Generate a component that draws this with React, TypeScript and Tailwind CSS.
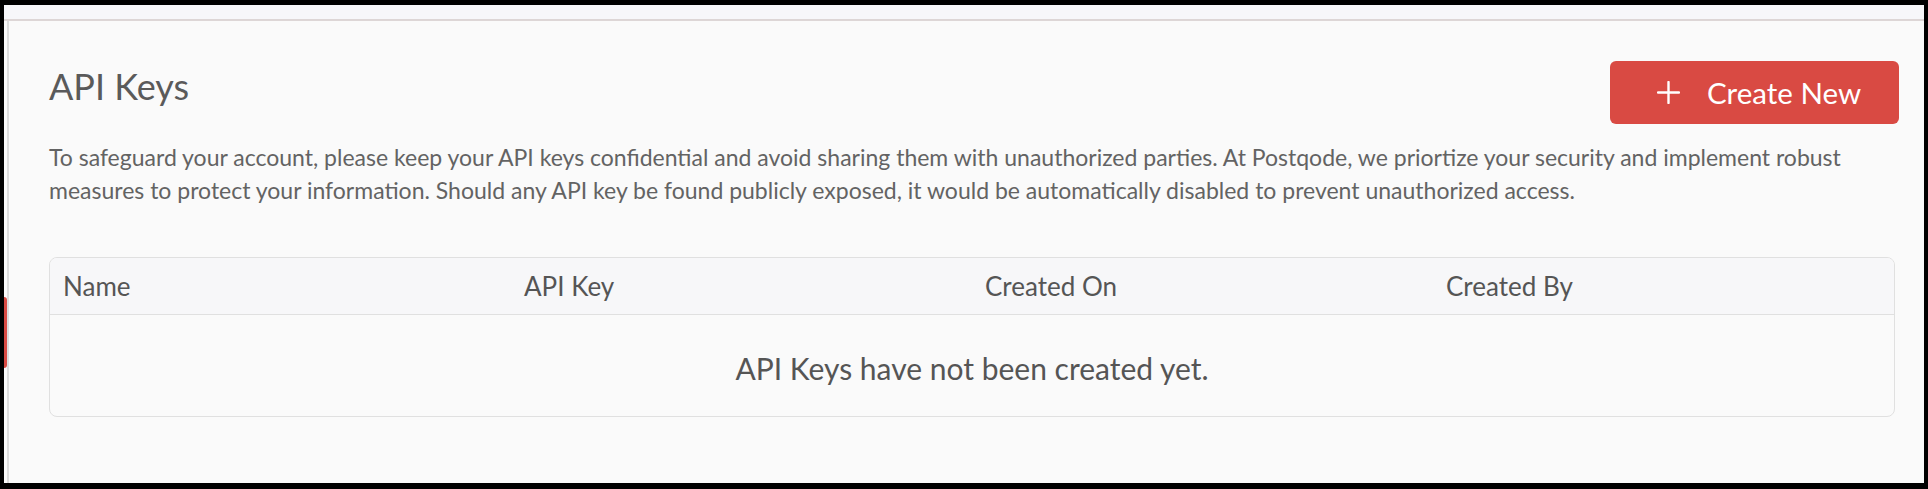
import React from "react";

export default function App() {
  const font = { fontFamily: "Lato, 'Liberation Sans', sans-serif" };
  return (
    <div className="w-[1928px] h-[489px] bg-black pt-[5px] pl-[4px] pr-[4px] pb-[6px]" style={font}>
      <div className="relative flex h-full w-full flex-col bg-[#fafafa]">
        <div className="h-[16px] shrink-0 border-b-2 border-[#ddd6d6] bg-[#f7f7fa]" />
        <div className="relative flex flex-1">
          <div className="absolute left-0 top-[276px] h-[71px] w-[3px] rounded-r-[3px] bg-[#d94a43]" />
          <div className="w-[3px] shrink-0 bg-[#fafafa]" />
          <div className="w-[2px] shrink-0 bg-[#dcdcdc]" />
          <div className="flex flex-1 flex-col pl-[40px] pr-[25px] pt-[40px]">
            <div className="flex items-start justify-between">
              <h1 className="mt-[3px] text-[36px] leading-[44px] text-[#5a5a5a]">API Keys</h1>
              <button className="flex h-[63px] w-[289px] items-center rounded-[6px] bg-[#d94a43] pl-[47px] text-white">
                <svg width="23" height="23" viewBox="0 0 23 23" className="shrink-0">
                  <path d="M11.5 1v21M1 11.5h21" stroke="white" strokeWidth="2.4" strokeLinecap="round" />
                </svg>
                <span className="ml-[27px] text-[29.5px] leading-none">Create New</span>
              </button>
            </div>
            <p className="mt-[17px] text-[23px] leading-[33px] text-[#636363]">
              <span className="block whitespace-nowrap">
                To safeguard your account, please keep your API keys confidential and avoid sharing them with unauthorized parties. At Postqode, we priortize your security and implement robust
              </span>
              <span className="block whitespace-nowrap">
                measures to protect your information. Should any API key be found publicly exposed, it would be automatically disabled to prevent unauthorized access.
              </span>
            </p>
            <div className="mt-[50px] mr-[4px] overflow-hidden rounded-[8px] border border-[#e0e0e0]">
              <div className="grid h-[57px] grid-cols-4 items-center border-b border-[#e0e0e0] bg-[#f7f7f9] text-[26px] text-[#555555]">
                <div className="pl-[13px]">Name</div>
                <div className="pl-[13px]">API Key</div>
                <div className="pl-[13px]">Created On</div>
                <div className="pl-[13px]">Created By</div>
              </div>
              <div className="flex h-[101px] items-center justify-center pt-[6px] text-[30px] text-[#555555]">
                API Keys have not been created yet.
              </div>
            </div>
          </div>
        </div>
      </div>
    </div>
  );
}
